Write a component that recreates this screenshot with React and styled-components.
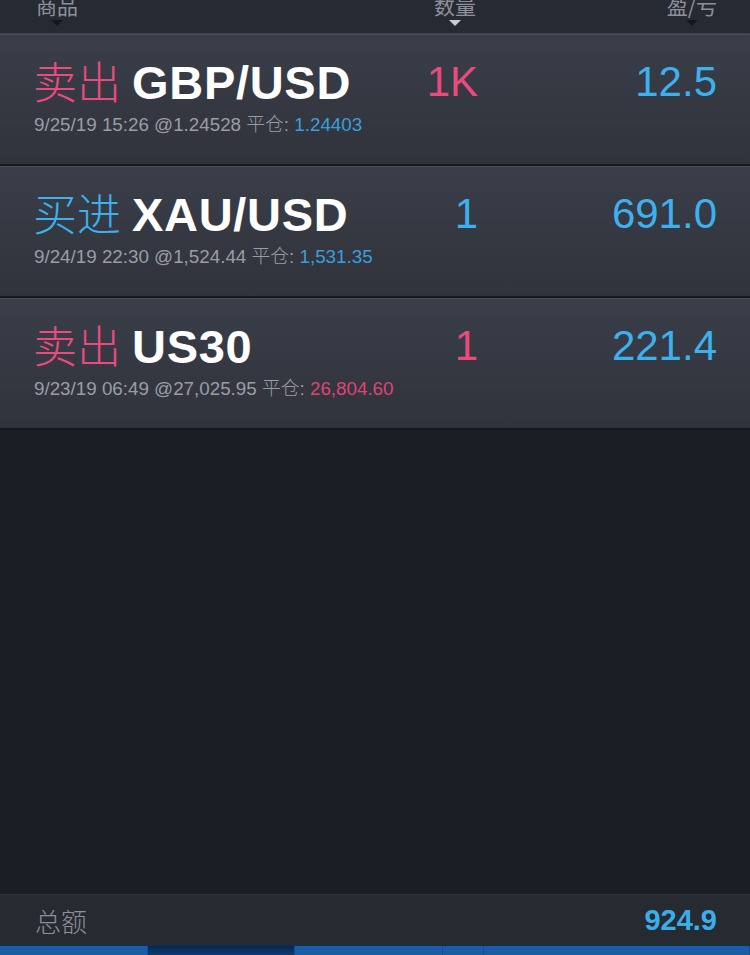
import React from 'react';
import styled, { createGlobalStyle } from 'styled-components';

const PINK = '#ea4a7c';
const BLUE = '#3cb1ee';

const positions = [
  {
    side: '卖出',
    symbol: 'GBP/USD',
    time: '9/25/19 15:26',
    open: '@1.24528',
    close: '1.24403',
    closeUp: true,
    qty: '1K',
    pl: '12.5',
    sell: true,
  },
  {
    side: '买进',
    symbol: 'XAU/USD',
    time: '9/24/19 22:30',
    open: '@1,524.44',
    close: '1,531.35',
    closeUp: true,
    qty: '1',
    pl: '691.0',
    sell: false,
  },
  {
    side: '卖出',
    symbol: 'US30',
    time: '9/23/19 06:49',
    open: '@27,025.95',
    close: '26,804.60',
    closeUp: false,
    qty: '1',
    pl: '221.4',
    sell: true,
  },
];

const GlobalStyle = createGlobalStyle`
  html, body {
    margin: 0;
    padding: 0;
    background: #1b1e25;
  }
  body {
    font-family: "Liberation Sans", "Noto Sans CJK SC", sans-serif;
    overflow: hidden;
  }
`;

const Screen = styled.div`
  width: 750px;
  height: 955px;
  display: flex;
  flex-direction: column;
  background: #1b1e25;
  overflow: hidden;
`;

const Header = styled.div`
  height: 33px;
  flex: none;
  display: grid;
  grid-template-columns: 372px 94px minmax(0, 1fr);
  padding: 0 33px 0 36px;
  background: #262a32;
  border-bottom: 1px solid #3d414b;
  overflow: hidden;
`;

const HeadCell = styled.div`
  display: flex;
  flex-direction: column;
  align-items: center;
  justify-self: ${(p) => p.$align};
  margin-top: -6px;
`;

const HeadLabel = styled.span`
  font-family: "Noto Sans CJK SC", sans-serif;
  font-size: 21px;
  line-height: 22px;
  color: #8e919a;
`;

const SortArrow = styled.span`
  margin-top: 4px;
  width: 0;
  height: 0;
  border-left: 6px solid transparent;
  border-right: 6px solid transparent;
  border-top: 6px solid ${(p) => (p.$active ? '#c9ccd2' : '#15171c')};
`;

const Row = styled.div`
  height: 129px;
  flex: none;
  display: grid;
  grid-template-columns: 335px 110px minmax(0, 1fr);
  padding: 0 33px;
  background: linear-gradient(#3a3e48, #30333c);
  border-top: 1px solid #4a4e58;
  border-bottom: 2px solid #16181e;
`;

const Info = styled.div`
  min-width: 0;
  display: flex;
  flex-direction: column;
  padding-top: 19px;
`;

const Title = styled.div`
  display: flex;
  align-items: baseline;
  white-space: nowrap;
  height: 52px;
`;

const Side = styled.span`
  font-family: "Noto Sans CJK SC", sans-serif;
  font-weight: 300;
  font-size: 44px;
  line-height: 52px;
  color: ${(p) => (p.$sell ? PINK : BLUE)};
  margin-right: 11px;
`;

const Symbol = styled.span`
  font-family: "Liberation Sans", sans-serif;
  font-weight: 700;
  font-size: 47px;
  line-height: 52px;
  letter-spacing: 0.7px;
  color: #ffffff;
`;

const Sub = styled.div`
  margin-top: 6px;
  margin-left: 1px;
  font-size: 18.8px;
  line-height: 22px;
  color: #9a9da5;
  white-space: nowrap;
`;

const SubCn = styled.span`
  font-family: "Noto Sans CJK SC", sans-serif;
  font-weight: 300;
`;

const SubValue = styled.span`
  color: ${(p) => (p.$up ? '#3a9fd9' : '#de4474')};
`;

const Qty = styled.div`
  justify-self: end;
  padding-top: 23px;
  font-size: 42px;
  line-height: 48px;
  color: ${(p) => (p.$sell ? PINK : BLUE)};
`;

const Pl = styled.div`
  justify-self: end;
  padding-top: 23px;
  font-size: 42px;
  line-height: 48px;
  color: ${BLUE};
`;

const Spacer = styled.div`
  flex: 1;
`;

const Footer = styled.div`
  height: 50px;
  flex: none;
  display: flex;
  align-items: center;
  justify-content: space-between;
  padding: 0 33px 0 35px;
  background: #262a31;
  border-top: 1px solid #2f333b;
`;

const TotalLabel = styled.span`
  font-family: "Noto Sans CJK SC", sans-serif;
  font-weight: 300;
  font-size: 26px;
  color: #8d9098;
`;

const TotalValue = styled.span`
  font-weight: 700;
  font-size: 29px;
  color: #3aaeea;
`;

const TabBar = styled.div`
  height: 9px;
  flex: none;
  display: flex;
  border-top: 1px solid #0e2f57;
`;

const Tab = styled.div`
  width: ${(p) => (p.$w ? `${p.$w}px` : 'auto')};
  flex: ${(p) => (p.$w ? 'none' : 1)};
  background: ${(p) =>
    p.$on ? 'linear-gradient(#08264a, #0c3d74)' : 'linear-gradient(#1b5ea8, #1a5ca4)'};
  border-right: 1px solid #164f8e;
`;

const App = () => (
  <Screen>
    <GlobalStyle />
    <Header>
      <HeadCell $align="start">
        <HeadLabel>商品</HeadLabel>
        <SortArrow />
      </HeadCell>
      <HeadCell $align="center">
        <HeadLabel>数量</HeadLabel>
        <SortArrow $active />
      </HeadCell>
      <HeadCell $align="end">
        <HeadLabel>盈/亏</HeadLabel>
        <SortArrow />
      </HeadCell>
    </Header>

    {positions.map((p) => (
      <Row key={p.symbol}>
        <Info>
          <Title>
            <Side $sell={p.sell}>{p.side}</Side>
            <Symbol>{p.symbol}</Symbol>
          </Title>
          <Sub>
            {p.time} {p.open} <SubCn>平仓</SubCn>:{' '}
            <SubValue $up={p.closeUp}>{p.close}</SubValue>
          </Sub>
        </Info>
        <Qty $sell={p.sell}>{p.qty}</Qty>
        <Pl>{p.pl}</Pl>
      </Row>
    ))}

    <Spacer />

    <Footer>
      <TotalLabel>总额</TotalLabel>
      <TotalValue>924.9</TotalValue>
    </Footer>
    <TabBar>
      <Tab $w={147} />
      <Tab $w={146} $on />
      <Tab $w={147} />
      <Tab $w={40} />
      <Tab />
    </TabBar>
  </Screen>
);

export default App;
